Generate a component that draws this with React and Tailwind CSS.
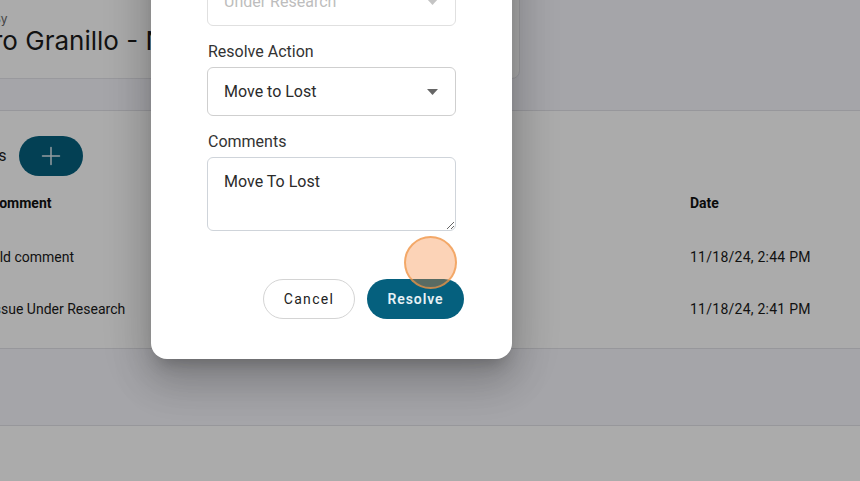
import React from "react";

export default function App() {
  return (
    <div className="relative w-[860px] h-[481px] overflow-hidden bg-[#f6f6fc] font-['Roboto',sans-serif] text-[#222]">
      {/* Page content */}
      <div className="h-[110px] flow-root">
        <div className="-ml-[20px] -mt-[20px] w-[540px] h-[99px] bg-white rounded-lg border border-[#e4e4ea] pt-[30px] pl-[12px]">
          <div className="text-[12px] leading-[16px] text-[#666] font-['Inter',sans-serif]">By</div>
          <div className="-mt-[2px] text-[26px] leading-[32px] text-[#1c1c1c] font-['Inter',sans-serif] whitespace-nowrap">
            ro Granillo - Nuñez
          </div>
        </div>
      </div>

      <div className="h-[239px] bg-white border-y border-[#e2e2e8] flow-root">
        <div className="flex items-center mt-[25px] -ml-[72px] gap-[13px]">
          <span className="text-[16px] leading-6 text-[#222]">Comments</span>
          <button className="w-[64px] h-[40px] rounded-full bg-[#05607e] flex items-center justify-center">
            <svg width="22" height="22" viewBox="0 0 22 22" fill="none" stroke="#dfe9ee" strokeWidth="1.5" strokeLinecap="round">
              <path d="M11 2.5v17M2.5 11h17" />
            </svg>
          </button>
        </div>
        <div className="mt-[17px] flex h-[20px] items-center text-[14px] font-bold text-[#111]">
          <div className="-ml-[10px] w-[700px]">Comment</div>
          <div>Date</div>
        </div>
        <div className="mt-[34px] flex h-[20px] items-center text-[14px] text-[#1a1a1a]">
          <div className="-ml-[10px] w-[700px]">Old comment</div>
          <div className="tracking-[0.25px]">11/18/24, 2:44 PM</div>
        </div>
        <div className="mt-[32px] flex h-[20px] items-center text-[14px] text-[#1a1a1a]">
          <div className="-ml-[10px] w-[700px]">Issue Under Research</div>
          <div className="tracking-[0.25px]">11/18/24, 2:41 PM</div>
        </div>
      </div>

      <div className="h-[76px]"></div>
      <div className="h-[60px] bg-white border-t border-[#e2e2e8]"></div>

      {/* Overlay */}
      <div className="absolute inset-0 bg-black/[0.33]"></div>

      {/* Dialog */}
      <div className="absolute left-[151px] bottom-[122px] w-[361px] bg-white rounded-[16px] shadow-[0_11px_15px_-7px_rgba(0,0,0,0.2),0_24px_38px_3px_rgba(0,0,0,0.14),0_9px_46px_8px_rgba(0,0,0,0.12)] pt-[24px] pb-[40px] pl-[56px] pr-[48px]">
        <div className="pr-[8px]">
          <div className="text-[20px] leading-7 font-medium text-[#222] mb-[16px]">Resolve Issue</div>
          <div className="text-[16px] leading-6 text-[#333] pl-[1px]">Status</div>
          <div className="mt-[3px] h-[49px] rounded-[6px] border border-[#e0e0e0] flex items-center justify-between pl-[16px] pr-[17px]">
            <span className="text-[16px] text-[#bdbdbd]">Under Research</span>
            <svg width="11" height="6" viewBox="0 0 11 6"><path d="M0 0h11L5.5 6z" fill="#c4c4c4" /></svg>
          </div>

          <div className="mt-[14px] text-[16px] leading-6 text-[#333] pl-[1px]">Resolve Action</div>
          <div className="mt-[3px] h-[49px] rounded-[6px] border border-[#cfcfcf] flex items-center justify-between pl-[16px] pr-[17px]">
            <span className="text-[16px] text-[#2b2b2b]">Move to Lost</span>
            <svg width="11" height="6" viewBox="0 0 11 6"><path d="M0 0h11L5.5 6z" fill="#666" /></svg>
          </div>

          <div className="mt-[14px] text-[16px] leading-6 text-[#333] pl-[1px]">Comments</div>
          <textarea
            readOnly
            defaultValue="Move To Lost"
            className="mt-[3px] block w-full h-[74px] rounded-[6px] border border-[#cfd4da] pt-[12px] px-[16px] text-[16px] leading-6 text-[#2b2b2b] font-['Roboto',sans-serif] outline-none resize-y"
          />
        </div>

        <div className="mt-[48px] flex justify-end gap-[12px]">
          <button className="w-[92px] h-[40px] rounded-full border border-[#d4d4d4] bg-white text-[14px] font-normal tracking-[1.3px] text-[#222]">
            Cancel
          </button>
          <button className="w-[97px] h-[40px] rounded-full bg-[#05607e] text-[14px] font-semibold tracking-[0.9px] text-[#e6f1f5]">
            Resolve
          </button>
        </div>
      </div>

      {/* Click indicator */}
      <div className="absolute left-[404px] top-[236px] w-[53px] h-[53px] rounded-full bg-[rgba(245,130,50,0.35)] border-2 border-[rgba(240,150,70,0.7)]"></div>
    </div>
  );
}
